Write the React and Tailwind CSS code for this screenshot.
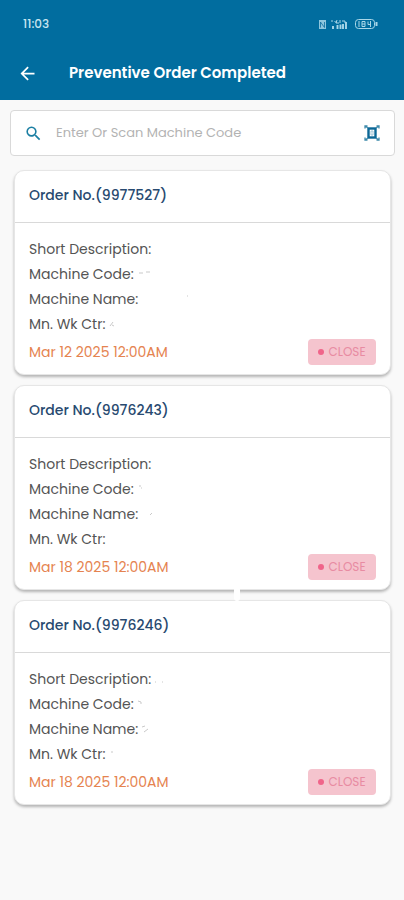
import { MdArrowBack, MdSearch } from "react-icons/md";

const orders = [
  {
    number: "9977527",
    date: "Mar 12 2025 12:00AM",
    marks: ["", "M5 11h4M12 10h4", "M49 9h1", "M5 14l3-4M7 13l2 1"],
  },
  {
    number: "9976243",
    date: "Mar 18 2025 12:00AM",
    marks: ["", "M5 9h2M7 11h1", "M12 13l2-2", ""],
    notch: true,
  },
  {
    number: "9976246",
    date: "Mar 18 2025 12:00AM",
    marks: ["M4 15h1M11 15h1", "M4 9l3 1v2", "M4 10l3-1M6 15l4-3", "M6 10h2"],
  },
];

const labels = [
  "Short Description:",
  "Machine Code:",
  "Machine Name:",
  "Mn. Wk Ctr:",
];

function StatusIcons() {
  return (
    <svg
      className="h-3 w-[60px]"
      viewBox="0 0 60 12"
      fill="none"
      stroke="#a9d7e8"
      aria-hidden="true"
    >
      <rect x="1" y="2" width="7" height="9" fill="#8fc6dd" stroke="none" />
      <path d="M2.5 9.500V4L6.500 9.500V4" stroke="#0d6c9d" strokeWidth="0.8" />
      <path d="M14 2v2M16.5 3l2 2M19 2l-1 3h3M22 2v3M24 3h3v2" />
      <path
        d="M15 8v3M19.500 7v4M22.500 6.500v4.500M25 6v5M28 4v7"
        strokeWidth="1.900"
      />
      <rect x="37.500" y="1.500" width="19" height="9" rx="3" />
      <path d="M58.500 4v4" strokeWidth="2" />
      <path d="M41 3v6M44 3.500h3v5h-3zM44 6h3M50 3.500v3h3M52.500 3v6" />
    </svg>
  );
}

function ScanIcon() {
  return (
    <svg
      className="h-4 w-4"
      viewBox="0 0 16 16"
      fill="none"
      stroke="#0b6796"
      aria-hidden="true"
    >
      <rect x="4.500" y="3.500" width="7" height="9" strokeWidth="2.400" />
      <path d="M7 6h2v4H7z" stroke="#9cc3d5" strokeWidth="1" />
      <path
        d="M1 3.500V1h2.500M12.500 1H15v2.500M15 12.500V15h-2.500M3.500 15H1v-2.500M1 1l3 2M15 1l-3 2M1 15l3-2M15 15l-3-2"
        stroke="#3e8aab"
        strokeWidth="1.300"
      />
    </svg>
  );
}

function OrderCard({ order }) {
  return (
    <article className="relative rounded-[10px] border border-[#e6e6e6] bg-white shadow-[0_2px_3px_rgba(0,0,0,0.28)]">
      <h2 className="border-b border-[#d9d9d9] px-[14px] pt-3 pb-[15px] text-sm leading-6 font-medium text-[#284a70]">
        Order No.({order.number})
      </h2>
      <div className="px-[14px] pt-[14px] pb-[9px]">
        <ul className="text-sm leading-[25px] text-[#545454]">
          {labels.map((label, i) => (
            <li key={label} className="flex items-center">
              {label}
              {order.marks[i] && (
                <svg
                  className="h-[25px] w-[60px]"
                  viewBox="0 0 60 25"
                  fill="none"
                  stroke="#c9c9c9"
                  aria-hidden="true"
                >
                  <path d={order.marks[i]} />
                </svg>
              )}
            </li>
          ))}
        </ul>
        <div className="mt-[2px] flex items-center justify-between">
          <time className="text-sm text-[#e58350]">{order.date}</time>
          <button className="flex h-[26px] w-[68px] items-center justify-center gap-1 rounded bg-[#f5c4ce] text-xs text-[#e88ba2]">
            <span className="h-[6px] w-[6px] rounded-full bg-[#f0648a]" />
            CLOSE
          </button>
        </div>
      </div>
      {order.notch && (
        <span className="absolute -bottom-3 left-[219px] z-10 h-[14px] w-[6px] rounded-full bg-white" />
      )}
    </article>
  );
}

function App() {
  return (
    <div className="min-h-screen bg-[#f9f9f9] font-[Poppins,Inter,sans-serif]">
      <header className="bg-[#016d9f] pb-[6px] text-white">
        {/* Status bar */}
        <div className="flex h-12 items-center justify-between pr-[26px] pl-[23px]">
          <span className="text-xs font-medium text-[#c9e5f0]">11:03</span>
          <StatusIcons />
        </div>
        {/* Title bar */}
        <div className="flex h-[46px] items-center pt-1 pl-[17px]">
          <button aria-label="Back">
            <MdArrowBack className="h-[21px] w-[21px]" />
          </button>
          <h1 className="ml-[31px] text-[15px] leading-6 font-semibold">
            Preventive Order Completed
          </h1>
        </div>
      </header>

      <main className="pt-[10px] pr-[9px] pb-6 pl-[10px]">
        <label className="flex h-[46px] items-center rounded border border-[#d9d9d9] bg-white pr-[14px] pl-[13px]">
          <MdSearch className="h-[19px] w-[19px] shrink-0 text-[#1b7fa3]" />
          <input
            type="text"
            aria-label="Machine code"
            placeholder="Enter Or Scan Machine Code"
            className="ml-[13px] min-w-0 flex-1 text-[13px] outline-none placeholder:text-[#b3b3b3]"
          />
          <button aria-label="Scan code">
            <ScanIcon />
          </button>
        </label>

        <div className="mt-[14px] flex flex-col gap-[10px] px-1">
          {orders.map((order) => (
            <OrderCard key={order.number} order={order} />
          ))}
        </div>
      </main>
    </div>
  );
}

export default App;
